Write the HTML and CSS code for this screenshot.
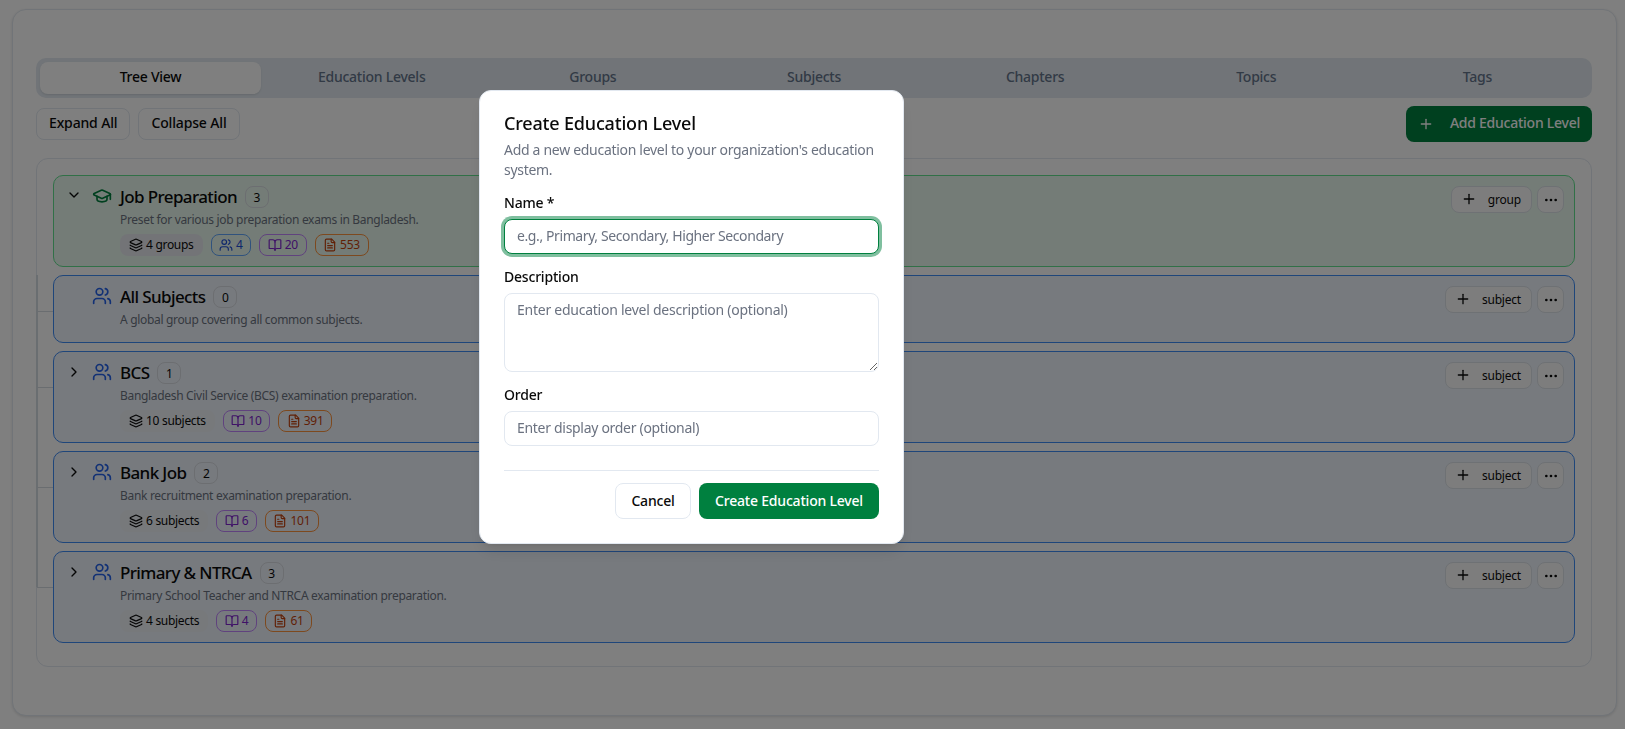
FILE: index.html
```html
<!DOCTYPE html>
<html lang="en">
<head>
<meta charset="utf-8">
<title>Education Levels</title>
<link rel="stylesheet" href="styles.css">
</head>
<body>
<svg class="sprite" aria-hidden="true">
  <symbol id="i-down" viewBox="0 0 24 24"><path d="m6 9 6 6 6-6"/></symbol>
  <symbol id="i-right" viewBox="0 0 24 24"><path d="m9 18 6-6-6-6"/></symbol>
  <symbol id="i-cap" viewBox="0 0 24 24"><path d="M21.42 10.922a1 1 0 0 0-.019-1.838L12.83 5.18a2 2 0 0 0-1.66 0L2.6 9.08a1 1 0 0 0 0 1.832l8.57 3.908a2 2 0 0 0 1.66 0z"/><path d="M22 10v6"/><path d="M6 12.5V16a6 3 0 0 0 12 0v-3.5"/></symbol>
  <symbol id="i-users" viewBox="0 0 24 24"><path d="M16 21v-2a4 4 0 0 0-4-4H6a4 4 0 0 0-4 4v2"/><path d="M16 3.128a4 4 0 0 1 0 7.744"/><path d="M22 21v-2a4 4 0 0 0-3-3.87"/><circle cx="9" cy="7" r="4"/></symbol>
  <symbol id="i-layers" viewBox="0 0 24 24"><path d="M12.83 2.18a2 2 0 0 0-1.66 0L2.6 6.08a1 1 0 0 0 0 1.83l8.58 3.91a2 2 0 0 0 1.66 0l8.58-3.9a1 1 0 0 0 0-1.83z"/><path d="M2 12a1 1 0 0 0 .58.91l8.6 3.91a2 2 0 0 0 1.65 0l8.58-3.9A1 1 0 0 0 22 12"/><path d="M2 17a1 1 0 0 0 .58.91l8.6 3.91a2 2 0 0 0 1.65 0l8.58-3.9A1 1 0 0 0 22 17"/></symbol>
  <symbol id="i-book" viewBox="0 0 24 24"><path d="M12 7v14"/><path d="M3 18a1 1 0 0 1-1-1V4a1 1 0 0 1 1-1h5a4 4 0 0 1 4 4 4 4 0 0 1 4-4h5a1 1 0 0 1 1 1v13a1 1 0 0 1-1 1h-6a3 3 0 0 0-3 3 3 3 0 0 0-3-3z"/></symbol>
  <symbol id="i-file" viewBox="0 0 24 24"><path d="M15 2H6a2 2 0 0 0-2 2v16a2 2 0 0 0 2 2h12a2 2 0 0 0 2-2V7Z"/><path d="M14 2v4a2 2 0 0 0 2 2h4"/><path d="M10 9H8"/><path d="M16 13H8"/><path d="M16 17H8"/></symbol>
  <symbol id="i-plus" viewBox="0 0 24 24"><path d="M5 12h14"/><path d="M12 5v14"/></symbol>
  <symbol id="i-more" viewBox="0 0 24 24"><circle cx="12" cy="12" r="1"/><circle cx="19" cy="12" r="1"/><circle cx="5" cy="12" r="1"/></symbol>
</svg>

<main class="shell">
  <div class="tabs">
    <div class="tab active">Tree View</div>
    <div class="tab">Education Levels</div>
    <div class="tab">Groups</div>
    <div class="tab">Subjects</div>
    <div class="tab">Chapters</div>
    <div class="tab">Topics</div>
    <div class="tab">Tags</div>
  </div>

  <div class="toolbar">
    <div class="toolbar-left">
      <button class="btn">Expand All</button>
      <button class="btn">Collapse All</button>
    </div>
    <button class="btn-add"><svg class="ico16"><use href="#i-plus"/></svg><span>Add Education Level</span></button>
  </div>

  <section class="tree">
    <article class="node node-level">
      <div class="node-chev"><svg class="ico16"><use href="#i-down"/></svg></div>
      <svg class="node-icon green"><use href="#i-cap"/></svg>
      <div class="node-body">
        <div class="node-title"><h3>Job Preparation</h3><span class="count">3</span></div>
        <p class="node-desc">Preset for various job preparation exams in Bangladesh.</p>
        <div class="chips">
          <span class="chip chip-gray chip-filled"><svg class="ico14"><use href="#i-layers"/></svg>4 groups</span>
          <span class="chip chip-blue"><svg class="ico14"><use href="#i-users"/></svg>4</span>
          <span class="chip chip-purple"><svg class="ico14"><use href="#i-book"/></svg>20</span>
          <span class="chip chip-orange"><svg class="ico14"><use href="#i-file"/></svg>553</span>
        </div>
      </div>
      <div class="node-actions">
        <button class="btn-sm"><svg class="ico16"><use href="#i-plus"/></svg>group</button>
        <button class="btn-more"><svg class="ico16"><use href="#i-more"/></svg></button>
      </div>
    </article>

    <article class="node node-group">
      <div class="node-chev"></div>
      <svg class="node-icon blue"><use href="#i-users"/></svg>
      <div class="node-body node-body-empty">
        <div class="node-title"><h3>All Subjects</h3><span class="count">0</span></div>
        <p class="node-desc">A global group covering all common subjects.</p>
      </div>
      <div class="node-actions">
        <button class="btn-sm"><svg class="ico16"><use href="#i-plus"/></svg>subject</button>
        <button class="btn-more"><svg class="ico16"><use href="#i-more"/></svg></button>
      </div>
    </article>

    <article class="node node-group">
      <div class="node-chev"><svg class="ico16"><use href="#i-right"/></svg></div>
      <svg class="node-icon blue"><use href="#i-users"/></svg>
      <div class="node-body">
        <div class="node-title"><h3>BCS</h3><span class="count">1</span></div>
        <p class="node-desc">Bangladesh Civil Service (BCS) examination preparation.</p>
        <div class="chips">
          <span class="chip chip-gray"><svg class="ico14"><use href="#i-layers"/></svg>10 subjects</span>
          <span class="chip chip-purple"><svg class="ico14"><use href="#i-book"/></svg>10</span>
          <span class="chip chip-orange"><svg class="ico14"><use href="#i-file"/></svg>391</span>
        </div>
      </div>
      <div class="node-actions">
        <button class="btn-sm"><svg class="ico16"><use href="#i-plus"/></svg>subject</button>
        <button class="btn-more"><svg class="ico16"><use href="#i-more"/></svg></button>
      </div>
    </article>

    <article class="node node-group">
      <div class="node-chev"><svg class="ico16"><use href="#i-right"/></svg></div>
      <svg class="node-icon blue"><use href="#i-users"/></svg>
      <div class="node-body">
        <div class="node-title"><h3>Bank Job</h3><span class="count">2</span></div>
        <p class="node-desc">Bank recruitment examination preparation.</p>
        <div class="chips">
          <span class="chip chip-gray"><svg class="ico14"><use href="#i-layers"/></svg>6 subjects</span>
          <span class="chip chip-purple"><svg class="ico14"><use href="#i-book"/></svg>6</span>
          <span class="chip chip-orange"><svg class="ico14"><use href="#i-file"/></svg>101</span>
        </div>
      </div>
      <div class="node-actions">
        <button class="btn-sm"><svg class="ico16"><use href="#i-plus"/></svg>subject</button>
        <button class="btn-more"><svg class="ico16"><use href="#i-more"/></svg></button>
      </div>
    </article>

    <article class="node node-group">
      <div class="node-chev"><svg class="ico16"><use href="#i-right"/></svg></div>
      <svg class="node-icon blue"><use href="#i-users"/></svg>
      <div class="node-body">
        <div class="node-title"><h3>Primary &amp; NTRCA</h3><span class="count">3</span></div>
        <p class="node-desc">Primary School Teacher and NTRCA examination preparation.</p>
        <div class="chips">
          <span class="chip chip-gray"><svg class="ico14"><use href="#i-layers"/></svg>4 subjects</span>
          <span class="chip chip-purple"><svg class="ico14"><use href="#i-book"/></svg>4</span>
          <span class="chip chip-orange"><svg class="ico14"><use href="#i-file"/></svg>61</span>
        </div>
      </div>
      <div class="node-actions">
        <button class="btn-sm"><svg class="ico16"><use href="#i-plus"/></svg>subject</button>
        <button class="btn-more"><svg class="ico16"><use href="#i-more"/></svg></button>
      </div>
    </article>
  </section>
</main>

<div class="overlay"></div>
<div class="modal" role="dialog">
  <h2 class="modal-title">Create Education Level</h2>
  <p class="modal-desc">Add a new education level to your organization's education system.</p>
  <form class="form">
    <div class="field">
      <label class="label">Name *</label>
      <input class="input input-focus" type="text" placeholder="e.g., Primary, Secondary, Higher Secondary">
    </div>
    <div class="field">
      <label class="label">Description</label>
      <textarea class="input textarea" placeholder="Enter education level description (optional)"></textarea>
    </div>
    <div class="field">
      <label class="label">Order</label>
      <input class="input" type="text" placeholder="Enter display order (optional)">
    </div>
    <div class="modal-footer">
      <button type="button" class="btn-cancel">Cancel</button>
      <button type="button" class="btn-primary">Create Education Level</button>
    </div>
  </form>
</div>
</body>
</html>
```

FILE: styles.css
```css
* { box-sizing: border-box; }
html, body { margin: 0; height: 100%; overflow: hidden; }
body {
  padding: 9px 8px 13px 12px;
  background: #fff;
  color: #0a0a0a;
  font-family: "Noto Sans", "Open Sans", sans-serif;
  font-size: 14px;
  letter-spacing: -0.2px;
}
.sprite { display: none; }
svg { fill: none; stroke: currentColor; stroke-width: 2; stroke-linecap: round; stroke-linejoin: round; flex: none; }
.ico16 { width: 16px; height: 16px; }
.ico14 { width: 14px; height: 14px; }
button { font: inherit; letter-spacing: inherit; color: inherit; cursor: pointer; }

.shell {
  height: 707px;
  border: 1px solid #e2e8f0;
  border-radius: 14px;
  background: #fff;
  padding: 48px 24px 0 23px;
  box-shadow: 0 1px 3px rgba(0,0,0,.12);
}

.tabs {
  display: grid;
  grid-template-columns: repeat(7, 1fr);
  height: 40px;
  padding: 4px;
  background: #e2e9f0;
  border-radius: 10px;
}
.tab {
  display: flex;
  align-items: center;
  justify-content: center;
  padding-bottom: 4px;
  border-radius: 8px;
  color: #64748b;
  font-weight: 500;
  letter-spacing: -0.25px;
}
.tab.active { background: #fff; color: #0a0a0a; box-shadow: 0 1px 2px rgba(0,0,0,.1); }

.toolbar {
  display: flex;
  align-items: center;
  justify-content: space-between;
  margin-top: 8px;
  height: 36px;
}
.toolbar-left { display: flex; gap: 8px; }
.btn {
  height: 32px;
  padding: 0 12px 4px;
  background: #fff;
  border: 1px solid #e2e8f0;
  border-radius: 8px;
  font-weight: 500;
  letter-spacing: -0.15px;
}
.btn-add {
  display: flex;
  align-items: center;
  gap: 16px;
  height: 36px;
  padding: 0 12px 4px;
  border: 0;
  border-radius: 8px;
  background: #00803f;
  color: #fff;
  font-weight: 500;
  letter-spacing: -0.25px;
  white-space: nowrap;
}
.btn-add svg { margin-top: 4px; }

.tree {
  position: relative;
  margin-top: 16px;
  height: 509px;
  border: 1px solid #e2e8f0;
  border-radius: 12px;
  padding: 16px;
  display: flex;
  flex-direction: column;
  gap: 8px;
}
.tree::before {
  content: "";
  position: absolute;
  left: -1px;
  top: 116px;
  height: 312px;
  border-left: 2px solid #d5dce3;
}
.node {
  position: relative;
  display: flex;
  align-items: flex-start;
  border: 1px solid #3f8cf5;
  border-radius: 10px;
  padding: 10px 10px 10px 11px;
}
.node-level { background: #e9f9ee; border-color: #62e08f; }
.node-group { background: #eff5fd; }
.node-group::before {
  content: "";
  position: absolute;
  left: -17px;
  top: 35px;
  width: 16px;
  border-top: 1px solid #d5dae0;
}
.node-chev { width: 16px; height: 16px; margin: 1px 0 0 1px; color: #0a0a0a; flex: none; }
.node-group .node-chev { margin-top: 2px; }
.node-icon { width: 20px; height: 20px; margin: 0 8px 0 10px; }
.green { color: #00803f; }
.blue { color: #2563eb; }
.node-body { flex: 1; min-width: 0; }
.node-body-empty { padding-bottom: 4px; }
.node-title { display: flex; align-items: center; gap: 8px; height: 22px; }
.node-title h3 { margin: 0; font-size: 17px; font-weight: 500; line-height: 22px; letter-spacing: -0.62px; }
.count {
  display: flex;
  align-items: center;
  justify-content: center;
  min-width: 24px;
  height: 22px;
  border: 1px solid #d8dce2;
  border-radius: 8px;
  font-size: 12px;
}
.node-desc { margin: 4px 0 0; font-size: 12px; line-height: 16px; color: #6b7280; letter-spacing: -0.32px; }
.chips { display: flex; gap: 8px; margin-top: 6px; }
.chip {
  display: inline-flex;
  align-items: center;
  gap: 3px;
  height: 22px;
  padding: 0 7.5px 1px;
  border: 1px solid transparent;
  border-radius: 8px;
  font-size: 12px;
  line-height: 1;
}
.chip svg { margin-top: 1px; }
.chip-gray { padding: 0 8px 1px; letter-spacing: -0.3px; color: #0a0a0a; background: #eef1f5; border-color: transparent; }
.chip-filled { background: #e6e9ee; }
.node-group .chip-gray { background: #eef2f7; }
.chip-blue { color: #1d4ed8; border-color: #60a5fa; }
.chip-purple { color: #7e22ce; border-color: #c084fc; }
.chip-orange { color: #c2410c; border-color: #fb923c; }

.node-actions { display: flex; gap: 5px; margin-left: auto; }
.btn-sm {
  display: flex;
  align-items: center;
  gap: 11px;
  height: 27px;
  padding: 0 10px 1px 9px;
  background: #fafbfb;
  border: 1px solid #dde2e8;
  border-radius: 8px;
  font-size: 12px;
}
.btn-more {
  display: flex;
  align-items: center;
  justify-content: center;
  width: 27px;
  height: 27px;
  padding: 0;
  background: #fafbfb;
  border: 1px solid #dde2e8;
  border-radius: 8px;
}

.overlay { position: fixed; inset: 0; background: rgba(0,0,0,.5); }
.modal {
  position: fixed;
  left: 479px;
  top: 90px;
  width: 425px;
  height: 454px;
  padding: 22px 24px 24px;
  background: #fff;
  border: 1px solid #e2e8f0;
  border-radius: 12px;
  box-shadow: 0 10px 15px -3px rgba(0,0,0,.1), 0 4px 6px -4px rgba(0,0,0,.1);
}
.modal-title { margin: 0; font-size: 18px; font-weight: 500; line-height: 20px; letter-spacing: -0.18px; }
.modal-desc { margin: 7px 0 0; font-size: 14px; line-height: 20px; color: #6b7280; letter-spacing: -0.3px; }
.form { display: flex; flex-direction: column; margin-top: 16px; }
.field { display: flex; flex-direction: column; gap: 9px; margin-bottom: 16px; }
.label { font-size: 14px; line-height: 14px; font-weight: 500; }
.input {
  width: 100%;
  height: 35px;
  padding: 0 12px 3px;
  border: 1px solid #e2e8f0;
  border-radius: 8px;
  background: #fff;
  font: inherit;
  letter-spacing: -0.3px;
  outline: 0;
}
.input::placeholder { color: #6b7280; opacity: 1; }
.input-focus { border-color: #00803f; box-shadow: 0 0 0 3px rgba(0,128,63,.5); letter-spacing: -0.4px; }
.textarea { height: 79px; padding: 6px 12px; resize: vertical; display: block; letter-spacing: -0.25px; }
.modal-footer {
  display: flex;
  justify-content: flex-end;
  gap: 8px;
  margin-top: 8px;
  padding-top: 12px;
  border-top: 1px solid #e2e8f0;
}
.btn-cancel {
  width: 76px;
  height: 36px;
  padding-bottom: 3px;
  background: #fff;
  border: 1px solid #e2e8f0;
  border-radius: 8px;
  font-weight: 500;
}
.btn-primary {
  width: 180px;
  height: 36px;
  padding-bottom: 3px;
  background: #00803f;
  border: 0;
  border-radius: 8px;
  color: #fff;
  font-weight: 500;
}
```
